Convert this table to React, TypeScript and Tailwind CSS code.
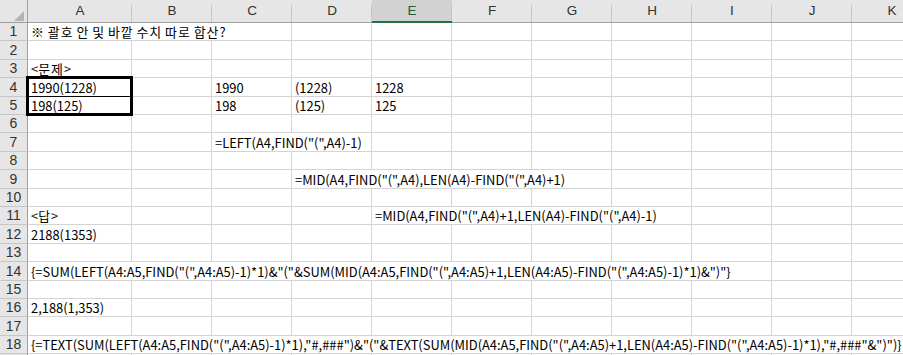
import React from "react";

const FONT = { fontFamily: '"Noto Sans CJK KR", "Noto Sans", sans-serif' };
const HEAD_FONT = { fontFamily: '"Liberation Sans", Arial, sans-serif' };

const COLS = ["A", "B", "C", "D", "E", "F", "G", "H", "I", "J", "K"];

type Cell = { col: number; span: number; text: string };

// sheet contents: col index (0 = A), number of columns the text runs over
const DATA: Record<number, Cell[]> = {
  1: [{ col: 0, span: 3, text: "※ 괄호 안 및 바깥 수치 따로 합산?" }],
  3: [{ col: 0, span: 1, text: "<문제>" }],
  4: [
    { col: 0, span: 1, text: "1990(1228)" },
    { col: 2, span: 1, text: "1990" },
    { col: 3, span: 1, text: "(1228)" },
    { col: 4, span: 1, text: "1228" },
  ],
  5: [
    { col: 0, span: 1, text: "198(125)" },
    { col: 2, span: 1, text: "198" },
    { col: 3, span: 1, text: "(125)" },
    { col: 4, span: 1, text: "125" },
  ],
  7: [{ col: 2, span: 2, text: '=LEFT(A4,FIND("(",A4)-1)' }],
  9: [{ col: 3, span: 4, text: '=MID(A4,FIND("(",A4),LEN(A4)-FIND("(",A4)+1)' }],
  11: [
    { col: 0, span: 1, text: "<답>" },
    { col: 4, span: 4, text: '=MID(A4,FIND("(",A4)+1,LEN(A4)-FIND("(",A4)-1)' },
  ],
  12: [{ col: 0, span: 1, text: "2188(1353)" }],
  14: [
    {
      col: 0,
      span: 9,
      text: '{=SUM(LEFT(A4:A5,FIND("(",A4:A5)-1)*1)&"("&SUM(MID(A4:A5,FIND("(",A4:A5)+1,LEN(A4:A5)-FIND("(",A4:A5)-1)*1)&")"}',
    },
  ],
  16: [{ col: 0, span: 1, text: "2,188(1,353)" }],
  18: [
    {
      col: 0,
      span: 11,
      text: '{=TEXT(SUM(LEFT(A4:A5,FIND("(",A4:A5)-1)*1),"#,###")&"("&TEXT(SUM(MID(A4:A5,FIND("(",A4:A5)+1,LEN(A4:A5)-FIND("(",A4:A5)-1)*1),"#,###"&")")}',
    },
  ],
};

const SPAN: Record<number, string> = {
  1: "col-span-1",
  2: "col-span-2",
  3: "col-span-3",
  4: "col-span-4",
  9: "col-span-9",
  11: "col-span-11",
};

function renderText(text: string) {
  const parts = text.split(/([\u3131-\uD7A3※]+)/);
  return (
    <span className="block">
      {parts.map((p, i) =>
        /[\u3131-\uD7A3※]/.test(p) ? (
          <span key={i} className="tracking-[1px]">
            {p}
          </span>
        ) : (
          <React.Fragment key={i}>{p}</React.Fragment>
        )
      )}
    </span>
  );
}

function rowCells(r: number) {
  const items = DATA[r] ?? [];
  const out: React.ReactNode[] = [];
  let c = 0;
  while (c < COLS.length) {
    const hit = items.find((it) => it.col === c);
    if (hit) {
      const boxed = hit.col === 0 && (r === 4 || r === 5);
      out.push(
        <div
          key={c}
          className={`${SPAN[hit.span]} relative flex items-end whitespace-pre border-r border-b border-[#d4d4d4] pl-[3px] pb-[1px] text-[12.9px] leading-[15px] text-black`}
        >
          {renderText(hit.text)}
          {boxed && (
            <span
              className={`pointer-events-none absolute left-[-2px] right-[-2px] ${
                r === 4
                  ? "top-[-2px] bottom-[-1px] border-l-[3px] border-r-[3px] border-t-[3px] border-b border-black"
                  : "top-0 bottom-[-2px] border-l-[3px] border-r-[3px] border-b-[3px] border-black"
              }`}
            />
          )}
        </div>
      );
      c += hit.span;
    } else {
      out.push(<div key={c} className="border-r border-b border-[#d4d4d4]" />);
      c += 1;
    }
  }
  return out;
}

export default function App() {
  const rows = Array.from({ length: 19 }, (_, i) => i + 1);
  return (
    <div className="h-[355px] w-[903px] overflow-hidden bg-white" style={FONT}>
      <div className="grid grid-cols-[28px_104px_repeat(11,80px)] grid-rows-[23px_18px_19px_18px_19px_18px_18px_19px_18px_19px_18px_18px_19px_18px_19px_18px_18px_19px_18px_19px]">
        {/* corner */}
        <div className="relative border-r border-b border-[#9f9f9f] bg-[#e6e6e6]">
          <div className="absolute left-[14px] top-[11px] h-0 w-0 border-b-[10px] border-l-[10px] border-b-[#b4b4b4] border-l-transparent" />
        </div>
        {COLS.map((c) => {
          const sel = c === "E";
          return (
            <div
              key={c}
              style={HEAD_FONT}
              className={`relative flex items-center justify-center text-[13.5px] ${
                sel
                  ? "border-b-2 border-[#217346] bg-[#d2d2d2] pt-[2px] text-[#215a36]"
                  : "border-b border-[#9f9f9f] bg-[#e6e6e6] text-[#333]"
              }`}
            >
              <span className="absolute bottom-0 right-0 top-[5px] w-px bg-[#c6c6c6]" />
              {c}
            </div>
          );
        })}
        <div className="border-b border-[#9f9f9f] bg-[#e6e6e6]" />
        {rows.map((r) => (
          <React.Fragment key={r}>
            <div
              style={HEAD_FONT}
              className="flex items-end justify-center border-r border-b border-r-[#9f9f9f] border-b-[#c6c6c6] bg-[#e6e6e6] pb-[1px] text-[14px] leading-[15px] text-[#333]"
            >
              {r < 19 ? <span>{r}</span> : null}
            </div>
            {rowCells(r)}
            <div className="border-b border-[#d4d4d4]" />
          </React.Fragment>
        ))}
      </div>
    </div>
  );
}
